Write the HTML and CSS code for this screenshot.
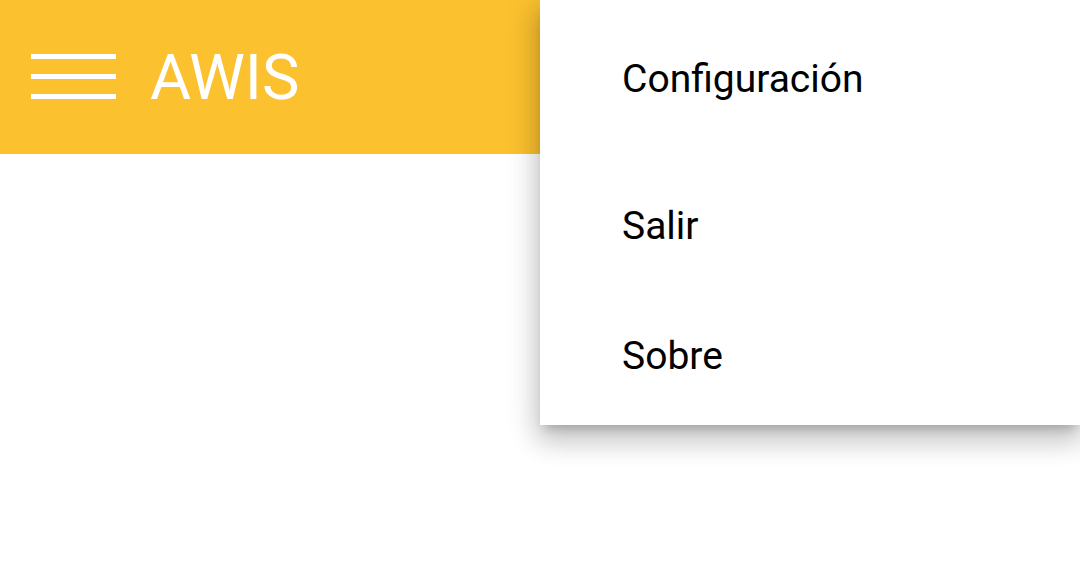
FILE: index.html
```html
<!DOCTYPE html>
<html lang="es">
<head>
<meta charset="utf-8">
<title>AWIS</title>
<link rel="stylesheet" href="styles.css">
</head>
<body>
<header class="toolbar">
  <button class="menu-btn" aria-label="Menú">
    <span class="bar"></span>
    <span class="bar"></span>
    <span class="bar"></span>
  </button>
  <h1 class="title">AWIS</h1>
</header>
<nav class="popup">
  <div class="item item-first">Configuración</div>
  <div class="item">Salir</div>
  <div class="item">Sobre</div>
</nav>
</body>
</html>
```
FILE: styles.css
```css
html, body {
  margin: 0;
  padding: 0;
  width: 1080px;
  height: 577px;
  overflow: hidden;
  background: #ffffff;
  font-family: Roboto, "Noto Sans", sans-serif;
}
.toolbar {
  height: 154px;
  background: #fbc12f;
  display: flex;
  align-items: center;
  padding-left: 31px;
  gap: 34px;
  box-sizing: border-box;
}
.menu-btn {
  background: none;
  border: 0;
  padding: 0;
  width: 85px;
  display: flex;
  flex-direction: column;
  gap: 15px;
  margin-bottom: 2px;
}
.bar {
  display: block;
  height: 5px;
  background: #ffffff;
}
.title {
  margin: 0;
  color: #ffffff;
  font-weight: 400;
  font-size: 63px;
  line-height: 1;
}
.popup {
  position: absolute;
  top: 0;
  left: 540px;
  width: 540px;
  height: 425px;
  background: #ffffff;
  box-sizing: border-box;
  padding-top: 14px;
  box-shadow: 0 8px 10px -5px rgba(0,0,0,0.2), 0 16px 24px 2px rgba(0,0,0,0.14), 0 6px 30px 5px rgba(0,0,0,0.12);
}
.item {
  height: 130px;
  display: flex;
  align-items: center;
  padding-left: 82px;
  font-size: 39px;
  line-height: 1;
  color: #000000;
}
.item-first {
  margin-bottom: 17px;
}
```
